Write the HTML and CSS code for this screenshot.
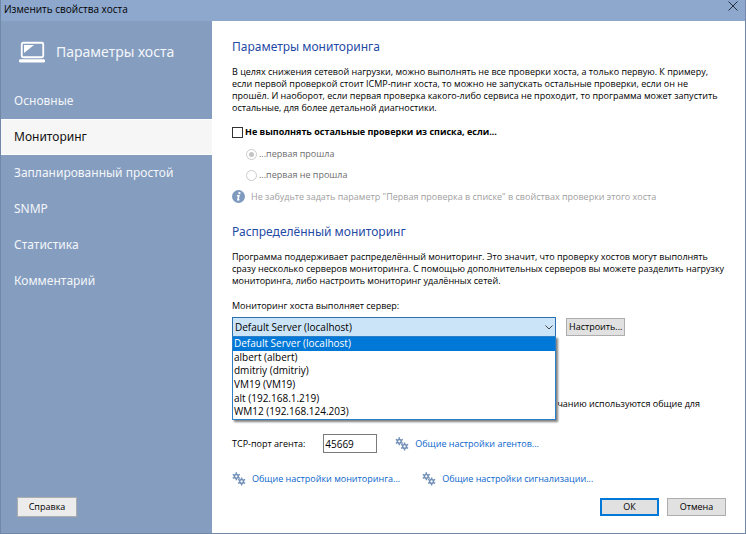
FILE: index.html
```html
<!DOCTYPE html>
<html lang="ru">
<head>
  <meta charset="UTF-8">
  <meta name="viewport" content="width=device-width, initial-scale=1.0">
  <title>Изменить свойства хоста</title>
  <link rel="stylesheet" href="styles.css">
</head>
<body>
  <svg width="0" height="0" class="sprite" aria-hidden="true">
    <symbol id="gears" viewBox="0 0 14 14">
      <g fill="none" stroke="#7391b8" stroke-width="1.5">
        <circle cx="4.3" cy="4.3" r="1.9"/>
        <path d="M4.3 .3v2M4.3 6.3v2M.8 2.3l1.7 1M6.1 5.3l1.7 1M.8 6.3l1.7-1M6.1 3.3l1.7-1"/>
        <circle cx="9.6" cy="9.4" r="1.9"/>
        <path d="M9.6 5.4v2M9.6 11.4v2M6.1 7.4l1.7 1M11.4 10.4l1.7 1M6.1 11.4l1.7-1M11.4 8.4l1.7-1"/>
      </g>
    </symbol>
  </svg>

  <div class="window">
    <header class="titlebar">
      <span>Изменить свойства хоста</span>
      <button class="close-btn" aria-label="Закрыть">
        <svg width="10" height="10" viewBox="0 0 10 10"><path d="M.5 .5l9 9M9.5 .5l-9 9" stroke="#26303f" fill="none"/></svg>
      </button>
    </header>

    <div class="main">
      <aside class="sidebar">
        <div class="sidebar-title">
          <svg width="26" height="22" viewBox="0 0 26 22">
            <rect x="2.75" y="1.75" width="21.5" height="14.5" rx="1.5" fill="none" stroke="#fff" stroke-width="1.8"/>
            <path d="M5 4h10L5 12z" fill="#fff"/>
            <rect x="0" y="18.2" width="26" height="3.4" rx="1.4" fill="#fff"/>
          </svg>
          <span>Параметры хоста</span>
        </div>
        <nav class="menu">
          <a href="#">Основные</a>
          <a href="#" class="active">Мониторинг</a>
          <a href="#">Запланированный простой</a>
          <a href="#">SNMP</a>
          <a href="#">Статистика</a>
          <a href="#">Комментарий</a>
        </nav>
        <button class="btn help-btn">Справка</button>
      </aside>

      <main class="content">
        <section class="block">
          <h2>Параметры мониторинга</h2>
          <p>В целях снижения сетевой нагрузки, можно выполнять не все проверки хоста, а только первую. К примеру,<br>
            если первой проверкой стоит ICMP-пинг хоста, то можно не запускать остальные проверки, если он не<br>
            прошёл. И наоборот, если первая проверка какого-либо сервиса не проходит, то программа может запустить<br>
            остальные, для более детальной диагностики.</p>
          <label class="check"><input type="checkbox">Не выполнять остальные проверки из списка, если...</label>
          <div class="radios">
            <label><input type="radio" name="first" checked disabled>...первая прошла</label>
            <label><input type="radio" name="first" disabled>...первая не прошла</label>
          </div>
          <div class="hint">
            <svg width="13" height="13" viewBox="0 0 13 13">
              <circle cx="6.5" cy="6.5" r="6.5" fill="#7f9abf"/>
              <circle cx="7.4" cy="3.1" r="1.2" fill="#fff"/>
              <path d="M4.9 5.7h2l-1 3.9q-.1.8 1.5-.2" stroke="#fff" stroke-width="1.5" fill="none"/>
            </svg>
            <span>Не забудьте задать параметр "Первая проверка в списке" в свойствах проверки этого хоста</span>
          </div>
        </section>

        <section class="block">
          <h2>Распределённый мониторинг</h2>
          <p>Программа поддерживает распределённый мониторинг. Это значит, что проверку хостов могут выполнять<br>
            сразу несколько серверов мониторинга. С помощью дополнительных серверов вы можете разделить нагрузку<br>
            мониторинга, либо настроить мониторинг удалённых сетей.</p>
          <label class="server-label" for="server">Мониторинг хоста выполняет сервер:</label>
          <div class="server-row">
            <div class="combo">
              <select id="server">
                <option>Default Server (localhost)</option>
                <option>albert (albert)</option>
                <option>dmitriy (dmitriy)</option>
                <option>VM19 (VM19)</option>
                <option>alt (192.168.1.219)</option>
                <option>WM12 (192.168.124.203)</option>
              </select>
              <svg class="arrow" width="8" height="5" viewBox="0 0 8 5"><path d="M.5 .5L4 4 7.5 .5" stroke="#444" fill="none"/></svg>
              <ul class="list" role="listbox" aria-label="Сервер">
                <li role="option" aria-selected="true" class="selected">Default Server (localhost)</li>
                <li role="option">albert (albert)</li>
                <li role="option">dmitriy (dmitriy)</li>
                <li role="option">VM19 (VM19)</li>
                <li role="option">alt (192.168.1.219)</li>
                <li role="option">WM12 (192.168.124.203)</li>
              </ul>
            </div>
            <button class="btn">Настроить...</button>
          </div>
        </section>

        <section class="agent">
          <p class="agent-note">чанию используются общие для</p>
          <div class="port-row">
            <label for="port">TCP-порт агента:</label>
            <input type="text" id="port" value="45669">
            <a href="#" class="link"><svg width="14" height="14"><use href="#gears"/></svg>Общие настройки агентов...</a>
          </div>
          <div class="links">
            <a href="#" class="link"><svg width="14" height="14"><use href="#gears"/></svg>Общие настройки мониторинга...</a>
            <a href="#" class="link"><svg width="14" height="14"><use href="#gears"/></svg>Общие настройки сигнализации...</a>
          </div>
        </section>

        <footer class="buttons">
          <button class="btn primary">ОК</button>
          <button class="btn">Отмена</button>
        </footer>
      </main>
    </div>
  </div>

  <script>
    const server = document.querySelector('#server');
    const items = document.querySelectorAll('.list li');

    items.forEach((item, index) => {
      item.addEventListener('click', () => {
        items.forEach((el) => el.classList.remove('selected'));
        item.classList.add('selected');
        server.selectedIndex = index;
      });
    });
  </script>
</body>
</html>
```
FILE: styles.css
```css
* {
  box-sizing: border-box;
}

body {
  margin: 0;
  font-family: "Open Sans", "Noto Sans", sans-serif;
  font-size: 9px;
  line-height: 12px;
  color: #000;
}

button, input, select {
  font-family: inherit;
  font-size: inherit;
  color: inherit;
}

svg {
  display: block;
  flex-shrink: 0;
}

.sprite {
  position: absolute;
}

.window {
  display: flex;
  flex-direction: column;
  min-height: 100vh;
  border: 1px solid #7188a9;
  border-top: none;
  background-color: #fff;
}

.titlebar {
  display: flex;
  justify-content: space-between;
  align-items: center;
  height: 21px;
  padding: 0 7px 3px 3px;
  background-color: #8da7cd;
  font-size: 10px;
}

.close-btn {
  padding: 0;
  margin-bottom: 6px;
  border: none;
  background: none;
}

.main {
  display: flex;
  flex: 1;
}

/* Sidebar */
.sidebar {
  display: flex;
  flex-direction: column;
  width: 211px;
  flex-shrink: 0;
  background-color: #859dbf;
  color: #fff;
  font-family: "Noto Sans", sans-serif;
}

.sidebar-title {
  display: flex;
  align-items: center;
  gap: 11px;
  height: 62px;
  padding-left: 18px;
  font-size: 14px;
  color: #f3f6fa;
}

.menu {
  display: flex;
  flex-direction: column;
}

.menu a {
  height: 36px;
  padding-left: 13px;
  font-size: 12px;
  line-height: 35px;
  color: #f3f6fa;
  text-decoration: none;
}

.menu a.active {
  background-color: #f6f6f6;
  border-top: 1px solid #fff;
  border-bottom: 1px solid #fff;
  line-height: 33px;
  color: #111;
}

.btn {
  height: 18px;
  min-width: 59px;
  padding: 0 2px;
  border: 1px solid #adadad;
  background-color: #e1e1e1;
  line-height: 14px;
}

.help-btn {
  align-self: flex-start;
  height: 20px;
  min-width: 60px;
  margin: auto 16px 16px;
  background-color: #ececec;
  color: #000;
  font-family: "Open Sans", sans-serif;
}

/* Content */
.content {
  display: flex;
  flex-direction: column;
  flex: 1;
  min-width: 0;
  padding: 17px 19px 17px 20px;
}

h2 {
  margin: 0 0 10px;
  font-family: "Noto Sans", sans-serif;
  font-size: 12px;
  font-weight: normal;
  line-height: 18px;
  color: #1f4ba5;
}

p {
  margin: 0;
}

.block {
  margin-bottom: 20px;
}

.check {
  display: flex;
  align-items: center;
  gap: 2px;
  margin-top: 12px;
  font-weight: bold;
}

.check input {
  appearance: none;
  width: 11px;
  height: 11px;
  margin: 0;
  border: 1px solid #333;
  background-color: #fff;
}

.radios {
  display: flex;
  flex-direction: column;
  gap: 9px;
  margin: 10px 0 9px 14px;
  color: #6d6d6d;
}

.radios label {
  display: flex;
  align-items: center;
  gap: 2px;
}

.radios input {
  appearance: none;
  width: 11px;
  height: 11px;
  margin: 0;
  border: 1px solid #ccc;
  border-radius: 50%;
  background-color: #fff;
}

.radios input:checked {
  background-color: #c4c4c4;
  background-clip: content-box;
  padding: 2px;
}

.hint {
  display: flex;
  align-items: center;
  gap: 6px;
  color: #a0a0a0;
}

.server-label {
  display: block;
  margin: 13px 0 5px;
}

.server-row {
  display: flex;
  align-items: center;
  gap: 10px;
}

.combo {
  position: relative;
  flex: 0 1 324px;
}

.combo select {
  appearance: none;
  display: block;
  width: 100%;
  height: 20px;
  padding: 0 2px;
  border: 1px solid #2a70b0;
  border-radius: 0;
  background-color: #cce4f7;
  font-size: 10px;
}

.arrow {
  position: absolute;
  top: 8px;
  right: 3px;
}

/* Opened list lies over the agent section */
.list {
  position: absolute;
  top: 19px;
  left: 0;
  display: grid;
  grid-auto-rows: 1fr;
  width: 100%;
  height: 84px;
  margin: 0;
  padding: 0;
  list-style: none;
  border: 1px solid #2b80c8;
  background-color: #fff;
  box-shadow: 2px 2px 2px rgba(0, 0, 0, 0.5);
  font-size: 10px;
}

.list li {
  padding-left: 1px;
  line-height: 13px;
}

.list .selected {
  background-color: #0078d7;
  color: #fff;
}

.agent {
  display: flex;
  flex-direction: column;
  margin-top: 41px;
}

.agent-note {
  align-self: flex-end;
  margin-right: 26px;
}

.port-row {
  display: flex;
  align-items: center;
  gap: 18px;
  margin-top: 24px;
}

.port-row input {
  width: 54px;
  height: 19px;
  padding: 0 1px;
  border: 1px solid #7a7a7a;
  font-size: 10px;
}

.links {
  display: flex;
  gap: 22px;
  margin-top: 19px;
}

.link {
  display: flex;
  align-items: center;
  gap: 6px;
  color: #0a66cc;
  text-decoration: none;
}

.buttons {
  display: flex;
  justify-content: flex-end;
  gap: 8px;
  margin-top: auto;
}

.buttons .primary {
  border: 2px solid #0078d7;
}
```
